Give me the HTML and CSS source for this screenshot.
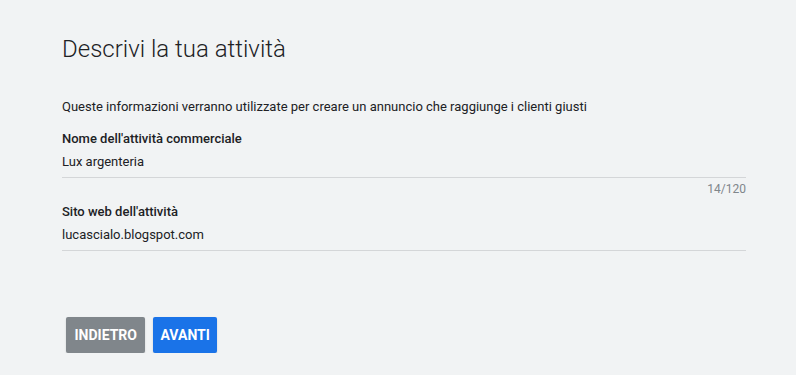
FILE: index.html
```html
<!DOCTYPE html>
<html lang="it">
<head>
    <meta charset="UTF-8">
    <title>Descrivi la tua attività</title>
    <link rel="stylesheet" href="styles.css">
</head>
<body>
    <div class="container">
        <h1>Descrivi la tua attività</h1>
        <p class="intro">Queste informazioni verranno utilizzate per creare un annuncio che raggiunge i clienti giusti</p>

        <!-- Business name -->
        <div class="field">
            <label class="field-label">Nome dell'attività commerciale</label>
            <div class="field-value">Lux argenteria</div>
            <div class="counter">14/120</div>
        </div>

        <!-- Website -->
        <div class="field">
            <label class="field-label">Sito web dell'attività</label>
            <div class="field-value">lucascialo.blogspot.com</div>
        </div>

        <div class="actions">
            <button class="btn btn-back">Indietro</button>
            <button class="btn btn-next">Avanti</button>
        </div>
    </div>
</body>
</html>
```

FILE: styles.css
```css
body {
    font-family: Roboto, "Liberation Sans", sans-serif;
    background-color: #f1f3f4;
    color: #202124;
    margin: 0;
    padding: 0;
}
.container {
    padding: 34px 50px 0 62px;
}
h1 {
    font-size: 24px;
    font-weight: 300;
    margin: 0 0 34px;
    line-height: 30px;
}
.intro {
    font-size: 13px;
    margin: 0 0 14px;
    line-height: 18px;
}
.field {
    display: flex;
    flex-direction: column;
    margin-bottom: 4px;
}
.field-label {
    font-size: 13px;
    font-weight: 500;
    line-height: 18px;
    margin-bottom: 5px;
}
.field-value {
    font-size: 13px;
    line-height: 18px;
    padding-bottom: 6px;
    border-bottom: 1px solid #d4d6d8;
}
.counter {
    align-self: flex-end;
    font-size: 12px;
    color: #80868b;
    line-height: 16px;
    margin: 3px 0 2px;
}
.actions {
    display: flex;
    gap: 8px;
    margin-top: 66px;
    padding-left: 4px;
}
.btn {
    font-family: Roboto, "Liberation Sans", sans-serif;
    font-size: 14px;
    font-weight: 700;
    text-transform: uppercase;
    color: #fff;
    border: none;
    border-radius: 2px;
    height: 36px;
    padding: 0 7px;
    cursor: pointer;
    box-shadow: 0 1px 2px rgba(0, 0, 0, 0.15);
}
.btn-back {
    background-color: #80868b;
    padding: 0 8.5px;
}
.btn-next {
    background-color: #1a73e8;
}
```
